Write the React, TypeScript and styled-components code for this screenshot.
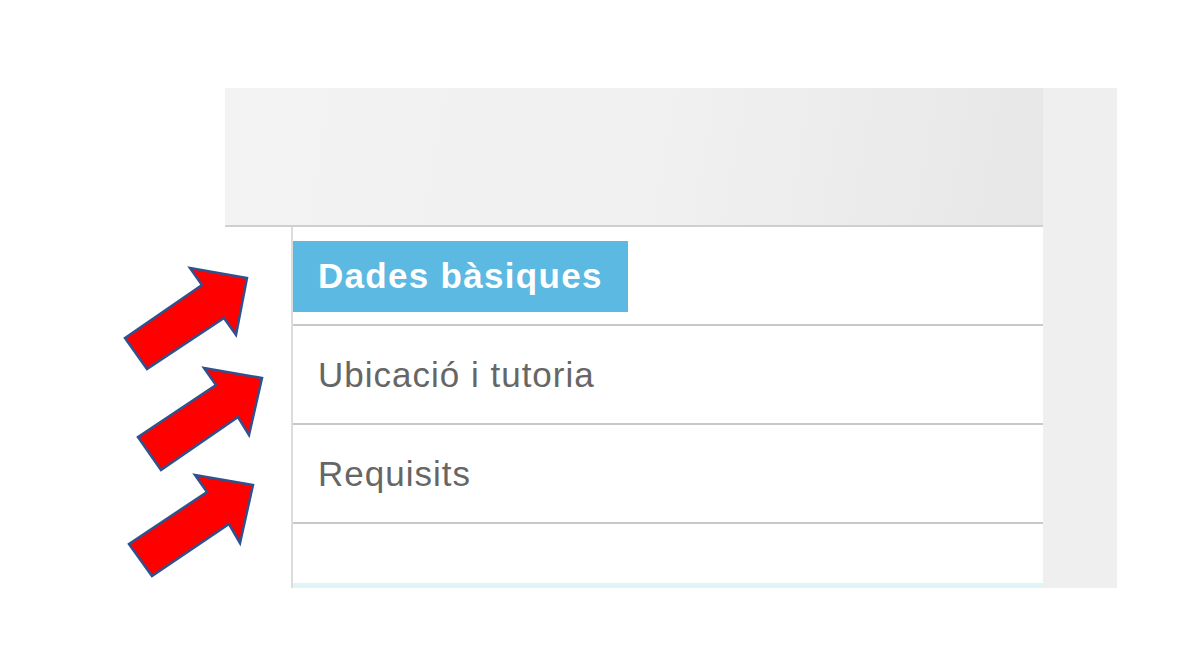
import React from "react";
import styled, { createGlobalStyle } from "styled-components";

const GlobalStyle = createGlobalStyle`
  html, body { margin: 0; padding: 0; background: #ffffff; }
  body { font-family: "Liberation Sans", Arial, sans-serif; }
`;

const Page = styled.div`
  position: relative;
  width: 1200px;
  height: 661px;
  overflow: hidden;
  background: #ffffff;
  padding: 88px 0 0 225px;
  box-sizing: border-box;
`;

const Frame = styled.div`
  display: flex;
  width: 892px;
  height: 500px;
`;

const MainColumn = styled.div`
  display: flex;
  flex-direction: column;
  width: 818px;
`;

const Header = styled.div`
  height: 137px;
  background: linear-gradient(100deg, #f3f3f3 0%, #f0f0f0 55%, #e7e7e7 100%);
  border-bottom: 2px solid #cfcfcf;
`;

const Body = styled.div`
  flex: 1;
  display: flex;
  background: #ffffff;
`;

const Gutter = styled.div`
  width: 66px;
  background: #ffffff;
`;

const Content = styled.div`
  flex: 1;
  display: flex;
  flex-direction: column;
  border-left: 2px solid #dcdcdc;
`;

const Row = styled.div<{ $active?: boolean }>`
  height: 97px;
  display: flex;
  align-items: center;
  border-bottom: 2px solid #c8c8c8;
  padding-left: ${(p) => (p.$active ? "0" : "25px")};
`;

const Tab = styled.div`
  display: flex;
  align-items: center;
  height: 71px;
  margin-top: 1px;
  padding: 0 25px;
  background: #5bb9e2;
  color: #ffffff;
  font-weight: bold;
  font-size: 35px;
  letter-spacing: 1.3px;
`;

const Label = styled.span`
  color: #666666;
  font-size: 35px;
  letter-spacing: 1px;
`;

const Filler = styled.div`
  flex: 1;
  border-bottom: 5px solid #dff4f6;
`;

const SidePanel = styled.div`
  width: 74px;
  background: #efefef;
`;

const Annotations = styled.svg`
  position: absolute;
  left: 0;
  top: 0;
  width: 1200px;
  height: 661px;
  pointer-events: none;
`;

const arrows = [
  "125,338 202,285 190,268 247,278 236,335 224,318 147,369",
  "138,437 216,385 204,368 262,378 249,435 238,417 161,470",
  "129,544 207,492 195,475 253,485 240,543 229,524 152,576",
];

export default function App() {
  return (
    <>
      <GlobalStyle />
      <Page>
        <Frame>
          <MainColumn>
            <Header />
            <Body>
              <Gutter />
              <Content>
                <Row $active>
                  <Tab>Dades bàsiques</Tab>
                </Row>
                <Row>
                  <Label>Ubicació i tutoria</Label>
                </Row>
                <Row>
                  <Label>Requisits</Label>
                </Row>
                <Filler />
              </Content>
            </Body>
          </MainColumn>
          <SidePanel />
        </Frame>
        <Annotations viewBox="0 0 1200 661">
          {arrows.map((pts, i) => (
            <polygon
              key={i}
              points={pts}
              fill="#ff0000"
              stroke="#2f528f"
              strokeWidth={2.5}
              strokeLinejoin="miter"
            />
          ))}
        </Annotations>
      </Page>
    </>
  );
}
